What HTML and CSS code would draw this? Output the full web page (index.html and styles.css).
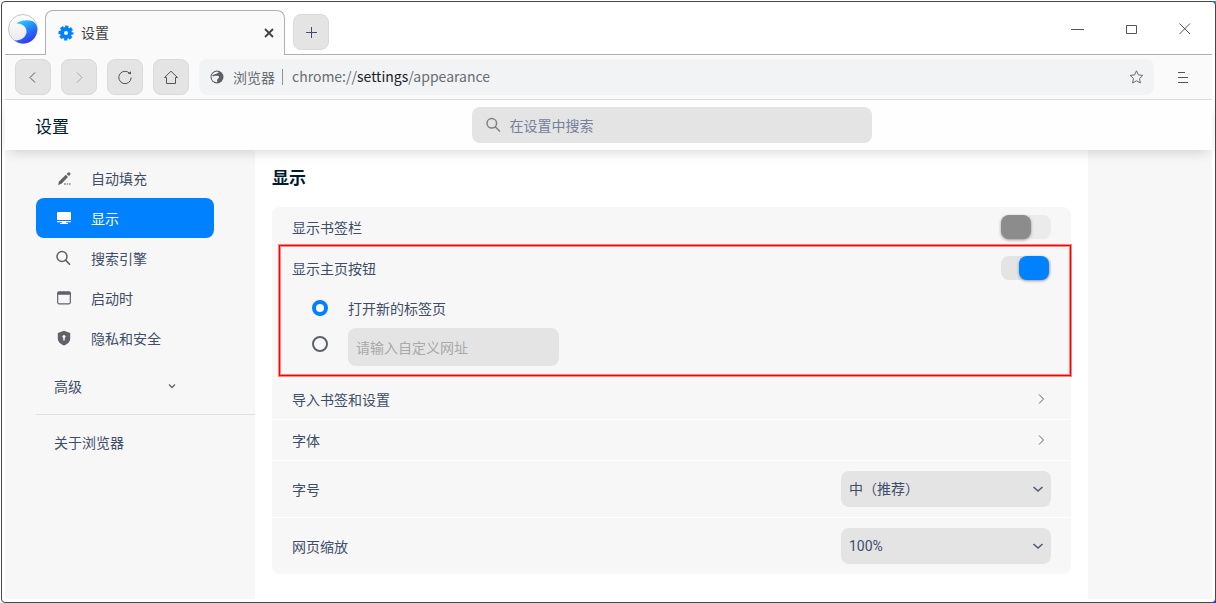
FILE: index.html
```html
<!DOCTYPE html>
<html lang="zh-CN">
<head>
<meta charset="utf-8">
<title>设置</title>
<link rel="stylesheet" href="styles.css">
</head>
<body>
<div class="window">
  <header class="tabbar">
    <svg class="logo" viewBox="0 0 32 32" aria-hidden="true">
      <defs>
        <linearGradient id="wave" x1="0.2" y1="0" x2="0.7" y2="1">
          <stop offset="0" stop-color="#35d0f5"/>
          <stop offset="0.5" stop-color="#1f7dfb"/>
          <stop offset="1" stop-color="#3b2bf5"/>
        </linearGradient>
        <linearGradient id="disc" x1="0" y1="0" x2="0" y2="1">
          <stop offset="0" stop-color="#ffffff"/>
          <stop offset="1" stop-color="#e9e9ec"/>
        </linearGradient>
      </defs>
      <circle cx="16" cy="16" r="14.500" fill="url(#disc)" stroke="#c4c4c6"/>
      <path d="M9.500 10.500C13 7.500 20 6.500 25.500 8C28.500 9.500 30.300 12.500 30.300 16.500C30 24.500 24 30.500 16 30.500C12.500 30.500 9.500 29.300 7.500 27.300C13 28 18.500 25 19.500 19.500C20 14 15.500 10.300 9.500 10.500Z" fill="url(#wave)"/>
    </svg>
    <div class="tab">
      <svg class="gear" viewBox="0 0 16 16" aria-hidden="true">
        <circle cx="8" cy="8" r="4" fill="none" stroke="#0081ff" stroke-width="4"/>
        <circle cx="8" cy="8" r="6.200" fill="none" stroke="#0081ff" stroke-width="2.600" stroke-dasharray="3.200 1.669" stroke-dashoffset="1.600"/>
      </svg>
      <span class="tab-title">设置</span>
      <button class="tab-close" aria-label="关闭标签页"><svg viewBox="0 0 10 10"><path d="M1 1L9 9M9 1L1 9" stroke="#414141" stroke-width="1.800"/></svg></button>
    </div>
    <button class="square new-tab" aria-label="新标签页"><svg viewBox="0 0 16 16"><path d="M8.500 3V14M3 8.500H14" stroke="#414d68"/></svg></button>
    <div class="win-controls">
      <button aria-label="最小化"><svg viewBox="0 0 14 14"><path d="M1 7.500H14" stroke="#555"/></svg></button>
      <button aria-label="最大化"><svg viewBox="0 0 14 14"><path d="M2.500 3.500H12.500V11.500H2.500Z" stroke="#555" fill="none"/></svg></button>
      <button aria-label="关闭"><svg viewBox="0 0 14 14"><path d="M1.500 1.500L12 12M12 1.500L1.500 12" stroke="#555"/></svg></button>
    </div>
  </header>

  <nav class="toolbar">
    <button class="square" aria-label="后退"><svg viewBox="0 0 16 16"><path d="M10 3.500L5 8.500L10 13.500" fill="none" stroke="#555"/></svg></button>
    <button class="square" aria-label="前进" disabled><svg viewBox="0 0 16 16"><path d="M6 3.500L11 8.500L6 13.500" fill="none" stroke="#a8a8a8"/></svg></button>
    <button class="square" aria-label="刷新"><svg viewBox="0 0 16 16"><path d="M13 4.800A6.200 6.200 0 1 0 14.200 8.500" fill="none" stroke="#555"/><path d="M10.800 4.800L14 5.200L14 2.200Z" fill="#555"/></svg></button>
    <button class="square" aria-label="主页"><svg viewBox="0 0 16 16"><path d="M1.500 8.500L8 2.200L14.500 8.500H12.500V14.500H3.500V8.500Z" fill="none" stroke="#555"/></svg></button>
    <div class="address">
      <svg class="site" viewBox="0 0 14 14" aria-hidden="true">
        <circle cx="7" cy="7" r="6.500" fill="#5c5f63"/>
        <path d="M1.600 7.600C1.200 4.300 3.600 1.700 7 1.700C8.500 1.700 9 2.200 8.200 3L6.200 3.800L4.500 5.200L7.500 5.800C9.300 6 9.500 7.500 8.500 8.300L7.200 9.500V12.300C4 12.500 1.900 10.500 1.600 7.600Z" fill="#f1f3f5"/>
        <path d="M2.500 5.800C4 5.200 5.500 4.500 9 4.500" fill="none" stroke="#5c5f63" stroke-width="1.400"/>
      </svg>
      <span class="site-name">浏览器</span>
      <span class="url">chrome://<b>settings</b>/appearance</span>
      <button class="plain" aria-label="收藏"><svg viewBox="0 0 16 16"><path d="M8.500 1.800L10.400 5.900L14.800 6.400L11.500 9.500L12.400 14L8.500 11.800L4.600 14L5.500 9.500L2.200 6.400L6.600 5.900Z" fill="none" stroke="#6a6d71"/></svg></button>
    </div>
    <button class="plain menu" aria-label="菜单"><svg viewBox="0 0 16 16"><path d="M3 3.500H10M3 8.500H13M3 13.500H13" stroke="#555"/></svg></button>
  </nav>

  <header class="settings-header columns">
    <h1>设置</h1>
    <label class="search">
      <svg viewBox="0 0 16 16" aria-hidden="true"><circle cx="6.800" cy="6.300" r="4.800" fill="none" stroke="#808080" stroke-width="1.500"/><path d="M10.200 9.800L15 14.500" stroke="#808080" stroke-width="1.500"/></svg>
      <input type="search" placeholder="在设置中搜索" aria-label="在设置中搜索">
    </label>
  </header>

  <div class="body columns">
    <aside class="sidebar">
      <a class="item" href="#autofill"><svg viewBox="0 0 16 16"><path d="M2 15L3 11.500L9.800 4.800L12 7L5.500 13.800Z" fill="#5f6368"/><path d="M10.600 3.900L11.800 2.700Q13 1.700 14 2.700Q15 3.700 14.200 4.700L12.900 6.100Z" fill="#5f6368"/><path d="M8 14H10M10.700 14H12.300M13 14H14.600" stroke="#5f6368" stroke-width="1.200"/></svg>自动填充</a>
      <a class="item active" href="#display"><svg viewBox="0 0 16 16"><path d="M2 2H14Q15 2 15 3V10H1V3Q1 2 2 2ZM1 11H15V12Q15 12.300 14 12.300H10V13H12V14H4V13H6V12.300H2Q1 12.300 1 12Z" fill="#fff"/></svg>显示</a>
      <a class="item" href="#search"><svg viewBox="0 0 16 16"><circle cx="6" cy="6.500" r="5" fill="none" stroke="#5f6368" stroke-width="1.500"/><path d="M9.600 10.100L14 14.700" stroke="#5f6368" stroke-width="1.600"/></svg>搜索引擎</a>
      <a class="item" href="#startup"><svg viewBox="0 0 16 16"><rect x="1.700" y="2.200" width="12.600" height="11.600" rx="1.200" fill="none" stroke="#5f6368" stroke-width="1.200"/><path d="M1.500 2.500Q1.500 1.600 2.500 1.600H13.500Q14.500 1.600 14.500 2.500V4.800H1.500Z" fill="#5f6368"/></svg>启动时</a>
      <a class="item" href="#privacy"><svg viewBox="0 0 16 16"><path d="M8 .8L14.200 3V8.500C14.200 11.800 11.500 14 8 15.500C4.500 14 1.800 11.800 1.800 8.500V3Z" fill="#5f6368"/><path d="M8 5.300A1.300 1.300 0 0 1 8.700 7.800V10.500H7.300V7.800A1.300 1.300 0 0 1 8 5.300Z" fill="#fff"/></svg>隐私和安全</a>
      <button class="advanced">高级<svg viewBox="0 0 10 10"><path d="M2 3.500L5 6.500L8 3.500" fill="none" stroke="#5f6368" stroke-width="1.300"/></svg></button>
      <hr>
      <a class="about" href="#about">关于浏览器</a>
    </aside>

    <main class="main">
      <h2>显示</h2>
      <section class="card">
        <div class="row">
          <label for="bookmarks">显示书签栏</label>
          <input class="toggle" type="checkbox" id="bookmarks">
        </div>
        <div class="group">
          <div class="row">
            <label for="home">显示主页按钮</label>
            <input class="toggle" type="checkbox" id="home" checked>
          </div>
          <div class="option">
            <input class="radio" type="radio" name="homepage" id="newtab" checked>
            <label for="newtab">打开新的标签页</label>
          </div>
          <div class="option custom">
            <input class="radio" type="radio" name="homepage" aria-label="自定义网址">
            <input class="field" type="text" placeholder="请输入自定义网址" aria-label="请输入自定义网址">
          </div>
          <div class="highlight"></div>
        </div>
        <a class="row" href="#import">导入书签和设置<svg class="arrow" viewBox="0 0 12 12"><path d="M4 1.500L8.500 6L4 10.500" fill="none" stroke="#5f6368"/></svg></a>
        <a class="row" href="#fonts">字体<svg class="arrow" viewBox="0 0 12 12"><path d="M4 1.500L8.500 6L4 10.500" fill="none" stroke="#5f6368"/></svg></a>
        <div class="row tall">
          <label for="size">字号</label>
          <span class="dropdown">
            <select id="size"><option>小</option><option selected>中（推荐）</option><option>大</option></select>
            <svg viewBox="0 0 12 12"><path d="M1.500 4L6 8L10.500 4" fill="none" stroke="#505c74" stroke-width="1.600"/></svg>
          </span>
        </div>
        <div class="row tall">
          <label for="scale">网页缩放</label>
          <span class="dropdown">
            <select id="scale"><option>100%</option><option>125%</option></select>
            <svg viewBox="0 0 12 12"><path d="M1.500 4L6 8L10.500 4" fill="none" stroke="#505c74" stroke-width="1.600"/></svg>
          </span>
        </div>
      </section>
    </main>
  </div>
</div>
</body>
</html>
```
FILE: styles.css
```css
* { box-sizing: border-box; }

body {
  margin: 0;
  padding: 1px 0 0 1px;
  min-height: 100vh;
  display: flex;
  font: 14px/19px "Noto Sans CJK SC", sans-serif;
  color: #414d68;
  background: linear-gradient(#1796d2, #2a22ff) right bottom / 3px calc(100% - 1px) no-repeat #fff;
}

a { color: inherit; text-decoration: none; }
button { padding: 0; border: 0; background: none; font: inherit; color: inherit; }
input, select { margin: 0; border: 0; font: inherit; color: inherit; }
svg { display: block; flex: none; width: 16px; height: 16px; }

.window {
  flex: 1;
  min-width: 0;
  display: flex;
  flex-direction: column;
  padding: 0 3px 3px;
  border: 1px solid #444649;
  border-radius: 4px;
  background: #fff;
}

.tabbar {
  display: flex;
  align-items: flex-end;
  height: 53px;
  padding-left: 2px;
  border-bottom: 1px solid #b0b0b0;
}

.logo { width: 32px; height: 32px; margin-bottom: 9px; }

.tab {
  display: flex;
  align-items: center;
  width: 240px;
  height: 45px;
  margin: 0 8px -1px 6px;
  padding: 0 10px 0 12px;
  border: 1px solid #b0b0b0;
  border-bottom: 0;
  border-radius: 8px 8px 0 0;
  background: #fafafa;
}

.tab-title { flex: 1; margin-left: 7px; padding-bottom: 2px; color: #414141; }
.tab-close svg { width: 10px; height: 10px; }

.square {
  display: grid;
  place-items: center;
  width: 36px;
  height: 36px;
  border: 1px solid #dadada;
  border-radius: 8px;
  background: #e4e4e4;
}

.new-tab { margin-bottom: 4px; }

.win-controls {
  display: flex;
  gap: 40px;
  margin: 0 20px 18px auto;
}

.win-controls svg { width: 14px; height: 14px; }

.toolbar {
  display: flex;
  align-items: center;
  gap: 10px;
  padding: 4px 21px 4px 10px;
  border-bottom: 1px solid #dadada;
  background: #fafafa;
}

.address {
  flex: 1;
  min-width: 0;
  display: flex;
  align-items: center;
  height: 36px;
  padding: 0 10px 0 11px;
  border-radius: 8px;
  background: #f1f3f5;
  color: #6a6d71;
}

.site { width: 14px; height: 14px; }
.site-name { margin: 0 7px 0 9px; }

.url {
  flex: 1;
  padding-left: 9px;
  line-height: 14px;
  padding-bottom: 2px;
  border-left: 1px solid #909396;
}

.url b { font-weight: 400; color: #202124; }
.menu { margin-left: 11px; }

.columns {
  display: grid;
  grid-template-columns: 250px minmax(0, 1fr) 124px;
}

.settings-header {
  position: relative;
  z-index: 1;
  align-items: center;
  height: 50px;
  background: #fefefe;
  box-shadow: 0 6px 12px -4px rgba(0, 0, 0, .16);
}

h1, h2 { margin: 0; font-size: 17px; line-height: 24px; color: #001a2e; }
h1 { padding: 1px 0 0 30px; font-weight: 400; }

.search {
  justify-self: center;
  display: flex;
  align-items: center;
  gap: 9px;
  width: 400px;
  max-width: 100%;
  height: 36px;
  padding: 0 13px;
  border-radius: 8px;
  background: #e4e4e4;
}

.search input { flex: 1; min-width: 0; padding: 0; background: none; outline: 0; }
.search input::placeholder { color: #76809a; opacity: 1; }

.body { flex: 1; background: #f7f7f7; }

.sidebar { display: flex; flex-direction: column; padding: 8px 0 0 31px; }

.item {
  display: flex;
  align-items: center;
  gap: 19px;
  width: 178px;
  height: 40px;
  padding: 0 20px;
  border-radius: 8px;
}

.active { background: #0081ff; color: #fff; }

.advanced {
  display: flex;
  align-items: center;
  justify-content: space-between;
  width: 178px;
  height: 40px;
  margin-top: 8px;
  padding: 0 37px 0 18px;
}

.advanced svg { width: 10px; height: 10px; }

.sidebar hr { width: 100%; height: 1px; margin: 8px 0; border: 0; background: #e0e0e0; }
.about { padding: 10px 18px; }

.main { padding: 15px 17px 25px; background: #fff; }
h2 { margin-bottom: 18px; }

.card {
  display: flex;
  flex-direction: column;
  gap: 1px;
}

.card > * { background: #f7f7f7; }
.card > :first-child { border-radius: 8px 8px 0 0; }
.card > :last-child { border-radius: 0 0 8px 8px; }

.row {
  display: flex;
  align-items: center;
  justify-content: space-between;
  height: 40px;
  padding: 0 20px;
}

.tall { height: 56px; }
.group { position: relative; padding-bottom: 12px; }

.highlight {
  position: absolute;
  inset: -4px -1px 1px 6px;
  border: 1px solid #ff8585;
  box-shadow: inset 0 0 0 1px #f00, inset 0 0 0 2px #ff8585;
  pointer-events: none;
}

.toggle {
  appearance: none;
  width: 50px;
  height: 24px;
  padding-right: 2px;
  display: flex;
  border-radius: 8px;
  background: #ebebeb;
}

.toggle::before {
  content: "";
  width: 30px;
  border-radius: 8px;
  background: #8c8c8c;
  box-shadow: 0 1px 3px rgba(0, 0, 0, .4);
}

.toggle:checked { justify-content: flex-end; background: #e4e4e4; }
.toggle:checked::before { background: #0081ff; }

.option { display: flex; align-items: center; gap: 20px; height: 40px; padding: 0 40px; }
.custom { align-items: flex-start; height: auto; }
.custom .radio { margin-top: 8px; }

.radio {
  appearance: none;
  width: 16px;
  height: 16px;
  border: 2px solid #5f6368;
  border-radius: 50%;
}

.radio:checked { border: 4px solid #0081ff; background: #fff; }

.field {
  width: 211px;
  height: 38px;
  padding: 0 8px;
  border-radius: 8px;
  background: #e4e4e4;
}

.field::placeholder { color: #a9a9a9; opacity: 1; }

.arrow { width: 12px; height: 12px; margin-right: 4px; }

.dropdown { display: grid; align-items: center; width: 210px; }
.dropdown > * { grid-area: 1 / 1; }
.dropdown svg { justify-self: end; width: 12px; height: 12px; margin-right: 7px; pointer-events: none; }

select {
  appearance: none;
  width: 100%;
  height: 36px;
  padding: 0 24px 0 8px;
  border-radius: 8px;
  background: #e4e4e4;
  font-family: Roboto, "Noto Sans CJK SC", sans-serif;
}
```
